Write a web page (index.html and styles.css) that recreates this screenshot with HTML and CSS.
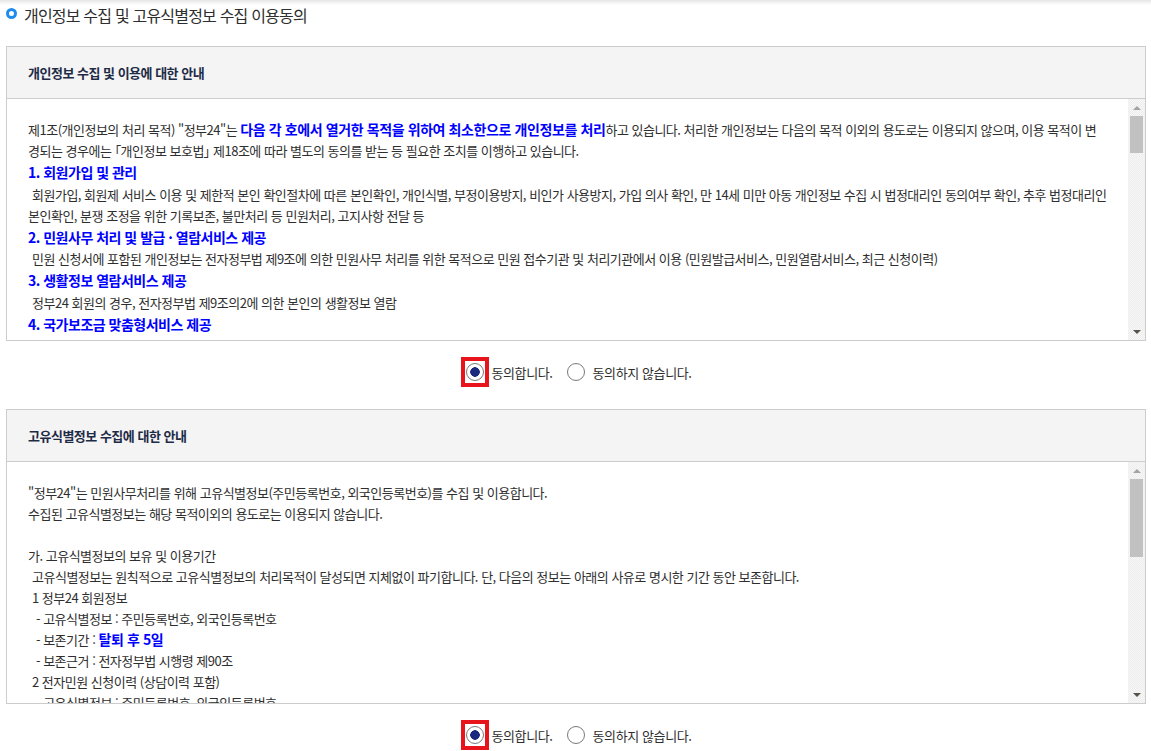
FILE: index.html
```html
<!DOCTYPE html>
<html lang="ko">
<head>
    <meta charset="UTF-8">
    <meta name="viewport" content="width=device-width, initial-scale=1.0">
    <title>개인정보 수집 및 고유식별정보 수집 이용동의</title>
    <link rel="stylesheet" href="styles.css">
</head>
<body>
    <div class="consent">
        <h2 class="consent-title"><span class="title-icon"></span>개인정보 수집 및 고유식별정보 수집 이용동의</h2>

        <!-- 개인정보 수집 및 이용 -->
        <div class="terms-box">
            <div class="terms-head">개인정보 수집 및 이용에 대한 안내</div>
            <div class="terms-body">
                <div class="terms-text">
                    <p>제1조(개인정보의 처리 목적) "정부24"는 <span class="em">다음 각 호에서 열거한 목적을 위하여 최소한으로 개인정보를 처리</span>하고 있습니다. 처리한 개인정보는 다음의 목적 이외의 용도로는 이용되지 않으며, 이용 목적이 변<br>경되는 경우에는 「개인정보 보호법」 제18조에 따라 별도의 동의를 받는 등 필요한 조치를 이행하고 있습니다.</p>
                    <h4>1. 회원가입 및 관리</h4>
                    <p class="ind">회원가입, 회원제 서비스 이용 및 제한적 본인 확인절차에 따른 본인확인, 개인식별, 부정이용방지, 비인가 사용방지, 가입 의사 확인, 만 14세 미만 아동 개인정보 수집 시 법정대리인 동의여부 확인, 추후 법정대리인<br>본인확인, 분쟁 조정을 위한 기록보존, 불만처리 등 민원처리, 고지사항 전달 등</p>
                    <h4>2. 민원사무 처리 및 발급 · 열람서비스 제공</h4>
                    <p class="ind">민원 신청서에 포함된 개인정보는 전자정부법 제9조에 의한 민원사무 처리를 위한 목적으로 민원 접수기관 및 처리기관에서 이용 (민원발급서비스, 민원열람서비스, 최근 신청이력)</p>
                    <h4>3. 생활정보 열람서비스 제공</h4>
                    <p class="ind">정부24 회원의 경우, 전자정부법 제9조의2에 의한 본인의 생활정보 열람</p>
                    <h4>4. 국가보조금 맞춤형서비스 제공</h4>
                    <p class="ind">국가보조금 맞춤형서비스 신청 시 수혜 가능한 서비스 안내 및 알림</p>
                </div>
                <div class="scrollbar">
                    <span class="sb-btn sb-up"></span>
                    <span class="sb-track"><span class="sb-thumb" style="height: 37px"></span></span>
                    <span class="sb-btn sb-down"></span>
                </div>
            </div>
        </div>
        <div class="agree">
            <label class="agree-opt"><span class="mark"><input type="radio" class="radio" name="agree1" checked></span>동의합니다.</label>
            <label class="agree-opt"><input type="radio" class="radio" name="agree1">동의하지 않습니다.</label>
        </div>

        <!-- 고유식별정보 수집 -->
        <div class="terms-box">
            <div class="terms-head">고유식별정보 수집에 대한 안내</div>
            <div class="terms-body">
                <div class="terms-text">
                    <p>"정부24"는 민원사무처리를 위해 고유식별정보(주민등록번호, 외국인등록번호)를 수집 및 이용합니다.</p>
                    <p>수집된 고유식별정보는 해당 목적이외의 용도로는 이용되지 않습니다.</p>
                    <p class="gap">가. 고유식별정보의 보유 및 이용기간</p>
                    <p class="ind">고유식별정보는 원칙적으로 고유식별정보의 처리목적이 달성되면 지체없이 파기합니다. 단, 다음의 정보는 아래의 사유로 명시한 기간 동안 보존합니다.</p>
                    <p class="ind">1 정부24 회원정보</p>
                    <p class="ind2">- 고유식별정보 : 주민등록번호, 외국인등록번호</p>
                    <p class="ind2">- 보존기간 : <span class="em">탈퇴 후 5일</span></p>
                    <p class="ind2">- 보존근거 : 전자정부법 시행령 제90조</p>
                    <p class="ind">2 전자민원 신청이력 (상담이력 포함)</p>
                    <p class="ind2">- 고유식별정보 : 주민등록번호, 외국인등록번호</p>
                    <p class="ind2">- 보존기간 : 5년</p>
                </div>
                <div class="scrollbar">
                    <span class="sb-btn sb-up"></span>
                    <span class="sb-track"><span class="sb-thumb" style="height: 78px"></span></span>
                    <span class="sb-btn sb-down"></span>
                </div>
            </div>
        </div>
        <div class="agree">
            <label class="agree-opt"><span class="mark"><input type="radio" class="radio" name="agree2" checked></span>동의합니다.</label>
            <label class="agree-opt"><input type="radio" class="radio" name="agree2">동의하지 않습니다.</label>
        </div>
    </div>
</body>
</html>
```

FILE: styles.css
```css
* {
    box-sizing: border-box;
}
body {
    margin: 0;
    padding: 0 5px 0 6px;
    font-family: "Noto Sans CJK KR", "Noto Sans", sans-serif;
    color: #2e2e2e;
    background: #fff linear-gradient(#e6e6e6, #fff 5px) no-repeat;
}
.consent-title {
    display: flex;
    align-items: center;
    gap: 7px;
    margin: 0 0 20px;
    padding-top: 4px;
    font-size: 16px;
    font-weight: normal;
    line-height: 22px;
    letter-spacing: -0.8px;
    color: #2e2e2e;
}
.title-icon {
    flex: none;
    width: 11px;
    height: 11px;
    margin-bottom: 4px;
    border: 3px solid #1f8ceb;
    border-radius: 50%;
}
.terms-box {
    border: 1px solid #cccccc;
}
.terms-head {
    height: 52px;
    padding: 0 21px;
    border-bottom: 1px solid #cccccc;
    background: #f4f4f4;
    font-size: 13px;
    font-weight: bold;
    line-height: 51px;
    letter-spacing: -0.5px;
    color: #1e2b47;
}
.terms-body {
    display: flex;
    height: 241px;
}
.terms-text {
    flex: 1;
    min-width: 0;
    overflow: hidden;
    padding: 20px 10px 0 21px;
    font-size: 13px;
    line-height: 21px;
    letter-spacing: -0.5px;
    white-space: nowrap;
    font-feature-settings: "palt";
}
.terms-text p {
    margin: 0;
}
.terms-text h4 {
    margin: 0;
    font-size: 14px;
    line-height: 22.5px;
    letter-spacing: -0.5px;
    color: #0000ff;
}
.terms-text .ind {
    text-indent: 4px;
}
.terms-text .ind2 {
    text-indent: 8px;
}
.terms-text .gap {
    margin-top: 21px;
}
.em {
    font-size: 14px;
    font-weight: bold;
    letter-spacing: -0.4px;
    color: #0000ff;
}
.scrollbar {
    flex: none;
    width: 17px;
    display: flex;
    flex-direction: column;
    background: repeating-conic-gradient(#f8f8f8 0 25%, #ececec 0 50%) 0 0 / 2px 2px;
}
.sb-btn {
    height: 17px;
    display: flex;
    align-items: center;
    justify-content: center;
}
.sb-btn::before {
    content: "";
    border-left: 4px solid transparent;
    border-right: 4px solid transparent;
}
.sb-up::before {
    border-bottom: 4px solid #a3a3a3;
}
.sb-down::before {
    border-top: 4px solid #57534a;
}
.sb-track {
    flex: 1;
    padding: 0 2px;
}
.sb-thumb {
    display: block;
    background: #c1c1c1;
}
.agree {
    display: flex;
    justify-content: center;
    align-items: center;
    gap: 14px;
    padding: 16px 0 22px;
    font-size: 13px;
    letter-spacing: -0.4px;
    color: #2e2e2e;
}
.agree-opt {
    display: flex;
    align-items: center;
    cursor: pointer;
}
.mark {
    display: flex;
    padding: 2px 1px;
    margin-right: 3px;
    border: 4px solid #e8141c;
}
.radio {
    appearance: none;
    width: 18px;
    height: 18px;
    margin: 0 8px 0 0;
    border: 1px solid #7a7a7a;
    border-radius: 50%;
    background: #fff;
    cursor: pointer;
}
.mark .radio {
    margin: 0;
}
.radio:checked {
    background: radial-gradient(circle, #1b2a7e 0 4.5px, #fff 5px);
}
```
